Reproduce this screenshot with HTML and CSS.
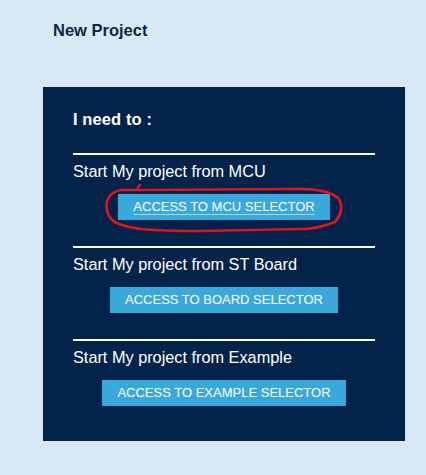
FILE: index.html
```html
<!DOCTYPE html>
<html lang="en">
<head>
<meta charset="utf-8">
<title>New Project</title>
<link rel="stylesheet" href="styles.css">
</head>
<body>
<div class="page">
  <h1 class="page-title">New Project</h1>
  <div class="panel">
    <h2 class="panel-title">I need to :</h2>
    <div class="option">
      <div class="divider"></div>
      <div class="option-title">Start My project from MCU</div>
      <div class="btn-row">
        <a class="btn btn-active" href="#">ACCESS TO MCU SELECTOR
          <svg class="circle-mark" width="245" height="52" viewBox="0 0 245 52" aria-hidden="true">
            <path d="M37 2 Q34 4 35 7 L188 6 Q225 5 236 16 Q242 27 232 39 Q215 46 198 46 L98 48 Q60 48 38 46 Q15 43 8 36 Q2 28 4 18 Q7 9 18 7 L35 7" fill="none" stroke="#e0141b" stroke-width="2.6" stroke-linecap="round" stroke-linejoin="round"/>
          </svg>
        </a>
      </div>
    </div>
    <div class="option">
      <div class="divider"></div>
      <div class="option-title">Start My project from ST Board</div>
      <div class="btn-row">
        <a class="btn" href="#">ACCESS TO BOARD SELECTOR</a>
      </div>
    </div>
    <div class="option">
      <div class="divider"></div>
      <div class="option-title">Start My project from Example</div>
      <div class="btn-row">
        <a class="btn" href="#">ACCESS TO EXAMPLE SELECTOR</a>
      </div>
    </div>
  </div>
</div>
</body>
</html>
```
FILE: styles.css
```css
html, body {
  margin: 0;
  padding: 0;
}
body {
  background: #d8e8f5;
  font-family: "Liberation Sans", Arial, sans-serif;
}
.page {
  padding: 21px 0 0 43px;
}
.page-title {
  margin: 0 0 48px 10px;
  font-size: 16.5px;
  line-height: 18px;
  font-weight: bold;
  color: #0e2748;
}
.panel {
  box-sizing: border-box;
  width: 362px;
  background: #03234b;
  padding: 23px 30px 35px;
  color: #ffffff;
}
.panel-title {
  margin: 0 0 25px;
  font-size: 16.5px;
  line-height: 18px;
  font-weight: bold;
  letter-spacing: 0.1px;
}
.option + .option {
  margin-top: 26px;
}
.divider {
  height: 2px;
  background: #ffffff;
}
.option-title {
  margin-top: 7px;
  font-size: 16.3px;
  line-height: 18px;
}
.btn-row {
  display: flex;
  justify-content: center;
  margin-top: 14px;
}
.btn {
  position: relative;
  display: block;
  height: 26px;
  line-height: 26px;
  padding: 0 15.5px;
  background: #3aa8db;
  color: #ffffff;
  font-size: 13px;
  text-decoration: none;
  white-space: nowrap;
}
.btn-active {
  text-decoration: underline;
  text-decoration-color: rgba(255, 255, 255, 0.55);
  text-underline-offset: 3px;
}
.circle-mark {
  position: absolute;
  left: -15px;
  top: -11px;
  pointer-events: none;
}
```
